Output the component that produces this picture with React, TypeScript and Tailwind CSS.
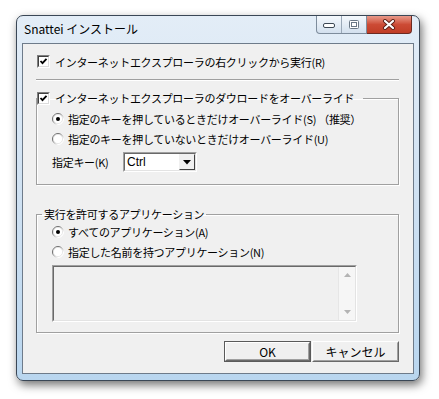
const jp = "font-['Noto_Sans_CJK_JP','Noto_Sans',sans-serif]";

function CheckBox({ checked }: { checked: boolean }) {
  return (
    <span className="box-border flex h-[13px] w-[13px] shrink-0 border border-b-white border-l-[#808080] border-r-white border-t-[#808080]">
      <span className="flex h-full w-full items-center justify-center border border-b-[#dcdcdc] border-l-[#404040] border-r-[#dcdcdc] border-t-[#404040] bg-white">
        {checked && (
          <svg width="9" height="9" viewBox="0 0 9 9">
            <path d="M1.5 4 L3.5 6.2 L7.5 1.8" fill="none" stroke="#000" strokeWidth="1.8" />
          </svg>
        )}
      </span>
    </span>
  );
}

function Radio({ checked, id }: { checked: boolean; id: string }) {
  return (
    <svg width="12" height="12" viewBox="0 0 12 12" className="shrink-0">
      <defs>
        <linearGradient id={id} x1="0" y1="0" x2="1" y2="1">
          <stop offset="0.35" stopColor="#6b6b6b" />
          <stop offset="0.75" stopColor="#ffffff" />
        </linearGradient>
      </defs>
      <circle cx="6" cy="6" r="5.5" fill="#fff" stroke={`url(#${id})`} strokeWidth="1" />
      <circle cx="6" cy="6" r="4.6" fill="none" stroke="#d8d8d8" strokeWidth="0.6" />
      {checked && <circle cx="6" cy="6" r="2" fill="#000" />}
    </svg>
  );
}

function RadioRow({ checked, id, label }: { checked: boolean; id: string; label: string }) {
  return (
    <div className="flex h-[20px] items-center gap-[4px]">
      <Radio checked={checked} id={id} />
      <span>{label}</span>
    </div>
  );
}

function Sunken({ className, children }: { className: string; children?: React.ReactNode }) {
  return (
    <div className={`box-border border border-b-white border-l-[#a0a0a0] border-r-white border-t-[#a0a0a0] ${className}`}>
      <div className="box-border h-full w-full border border-b-[#e3e3e3] border-l-[#696969] border-r-[#e3e3e3] border-t-[#696969]">
        {children}
      </div>
    </div>
  );
}

function Button({ label, isDefault }: { label: string; isDefault?: boolean }) {
  return (
    <div className={`box-border h-[21px] w-[87px] ${isDefault ? "border border-[#5a5a5a]" : ""}`}>
      <div className="box-border h-full w-full border border-b-[#696969] border-l-white border-r-[#696969] border-t-white">
        <div className="box-border flex h-full w-full items-center justify-center border border-b-[#a0a0a0] border-l-[#f0f0f0] border-r-[#a0a0a0] border-t-[#f0f0f0] bg-[#f0f0f0]">
          {label}
        </div>
      </div>
    </div>
  );
}

export default function App() {
  return (
    <div className={`h-[399px] w-[439px] overflow-hidden bg-white pl-[16px] pt-[15px] ${jp}`}>
      <div className="box-border flex h-[366px] w-[404px] flex-col rounded-[7px] border border-[#3a4756] bg-gradient-to-b from-[#e3edf7] via-[#cfe1f2] to-[#b9d6ef] shadow-[2px_4px_10px_rgba(0,0,0,0.55)]">
        {/* title bar */}
        <div className="flex h-[27px] items-start">
          <span className="pl-[7px] pt-[5px] text-[12px] leading-[16px] text-black">Snattei インストール</span>
          <div className="ml-auto mr-[7px] flex h-[18px]">
            <div className="flex overflow-hidden rounded-bl-[4px] border border-t-0 border-[#7d8c9c] bg-gradient-to-b from-[#f4f8fc] to-[#d3e0ee]">
              <div className="flex w-[25px] items-center justify-center border-r border-[#9aa8b7]">
                <svg width="14" height="8" viewBox="0 0 14 8">
                  <rect x="1.5" y="2.5" width="11" height="4" rx="1.5" fill="#fff" stroke="#3e4955" />
                </svg>
              </div>
              <div className="flex w-[24px] items-center justify-center">
                <svg width="12" height="11" viewBox="0 0 12 11">
                  <rect x="1.5" y="1.5" width="9" height="8" rx="1" fill="#fff" stroke="#6b7886" />
                  <rect x="3.5" y="3.5" width="5" height="4" fill="none" stroke="#6b7886" />
                </svg>
              </div>
            </div>
            <div className="flex w-[45px] items-center justify-center rounded-br-[4px] border border-t-0 border-l-0 border-[#6b2a22] bg-gradient-to-b from-[#e8998a] via-[#cc4b35] to-[#c03d26]">
              <svg width="14" height="11" viewBox="0 0 14 11">
                <path d="M3 2 L11 9 M11 2 L3 9" stroke="#5a1e15" strokeWidth="4" strokeLinecap="round" />
                <path d="M3 2 L11 9 M11 2 L3 9" stroke="#fff" strokeWidth="2.2" strokeLinecap="round" />
              </svg>
            </div>
          </div>
        </div>

        {/* client area */}
        <div className="mx-[5px] box-border h-[331px] border border-[#6e7b8a] bg-[#f0f0f0] pl-[13px] pr-[14px] pt-[11px] text-[11px] leading-[16px] tracking-[-0.3px] text-black">
          <div className="flex h-[13px] items-center gap-[5px] pl-[1px]">
            <CheckBox checked />
            <span>インターネットエクスプローラの右クリックから実行(R)</span>
          </div>

          <div className="mt-[11px] h-[2px] border-b border-t border-b-white border-t-[#a0a0a0]" />

          <fieldset className="mt-[9px] border border-[#a0a0a0] shadow-[inset_1px_1px_0_#fff,1px_1px_0_#fff]">
            <legend className="flex h-[16px] items-center gap-[5px] pr-[9px]">
              <CheckBox checked />
              <span>インターネットエクスプローラのダウロードをオーバーライド</span>
            </legend>
            <div className="pb-[12px] pl-[15px] pt-[3px]">
              <RadioRow checked id="r1" label="指定のキーを押しているときだけオーバーライド(S) （推奨）" />
              <RadioRow checked={false} id="r2" label="指定のキーを押していないときだけオーバーライド(U)" />
              <div className="mt-[3px] flex h-[20px] items-center">
                <span className="w-[71px]">指定キー(K)</span>
                <Sunken className="h-[20px] w-[74px] bg-white">
                  <div className="flex h-full items-center bg-white pl-[2px]">
                    <span className="flex-1 font-['Liberation_Sans',sans-serif] text-[12px] tracking-normal">Ctrl</span>
                    <div className="box-border flex h-[16px] w-[16px] items-center justify-center border border-b-[#404040] border-l-[#f0f0f0] border-r-[#404040] border-t-[#f0f0f0] bg-[#f0f0f0]">
                      <svg width="8" height="5" viewBox="0 0 8 5">
                        <path d="M0 0 H8 L4 4.5 Z" fill="#000" />
                      </svg>
                    </div>
                  </div>
                </Sunken>
              </div>
            </div>
          </fieldset>

          <fieldset className="mt-[21px] border border-[#a0a0a0] shadow-[inset_1px_1px_0_#fff,1px_1px_0_#fff]">
            <legend className="ml-[5px] h-[16px] px-[2px]">実行を許可するアプリケーション</legend>
            <div className="pb-[10px] pl-[15px]">
              <RadioRow checked id="r3" label="すべてのアプリケーション(A)" />
              <RadioRow checked={false} id="r4" label="指定した名前を持つアプリケーション(N)" />
              <Sunken className="mt-[3px] h-[57px] w-[305px]">
                <div className="flex h-full justify-end bg-[#f0f0f0]">
                  <div className="flex w-[17px] flex-col items-center justify-between border-l border-[#e6e6e6] bg-[#f6f6f6] py-[6px]">
                    <svg width="7" height="4" viewBox="0 0 7 4">
                      <path d="M0 4 H7 L3.5 0 Z" fill="#b4b4b4" />
                    </svg>
                    <svg width="7" height="4" viewBox="0 0 7 4">
                      <path d="M0 0 H7 L3.5 4 Z" fill="#b4b4b4" />
                    </svg>
                  </div>
                </div>
              </Sunken>
            </div>
          </fieldset>

          <div className="mt-[8px] flex justify-end gap-[1px] text-[12px] tracking-normal">
            <Button label="OK" isDefault />
            <Button label="キャンセル" />
          </div>
        </div>
      </div>
    </div>
  );
}
